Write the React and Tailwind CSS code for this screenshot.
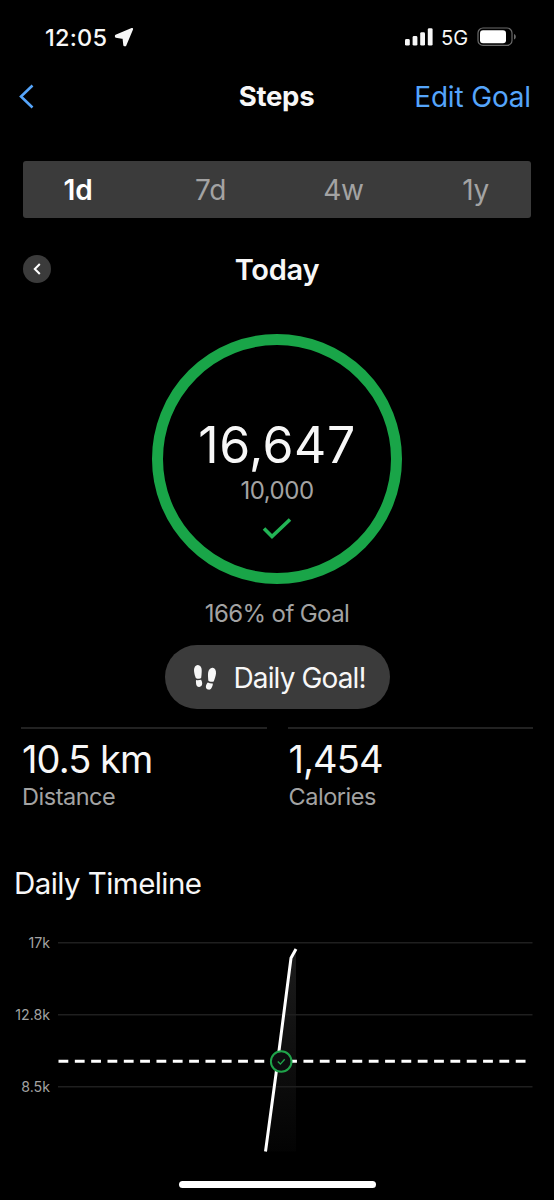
import React from "react";

const ranges = [
  { id: "1d", active: true, className: "pr-[17px]" },
  { id: "7d", className: "pr-1.5" },
  { id: "4w", className: "pl-1.5" },
  { id: "1y", className: "pl-4" },
];

const stats = [
  { value: "10.5 km", label: "Distance" },
  { value: "1,454", label: "Calories" },
];

const yTicks = ["17k", "12.8k", "8.5k"];

const StatusBar = () => (
  <div className="flex h-[74px] items-center justify-between pl-[45px] pr-[37px]">
    <div className="flex items-center gap-[7px]">
      <span className="pt-px text-[23.5px] font-medium leading-none tracking-[0.01em]">12:05</span>
      <svg className="h-5 w-5" viewBox="0 0 20 20" fill="currentColor">
        <path
          d="M18 2 2 8.800v.8L9.600 10.800 10.400 18.200h.8Z"
          stroke="currentColor"
          strokeWidth="2.2"
          strokeLinejoin="round"
        />
      </svg>
    </div>
    <div className="flex items-center">
      <svg className="h-[18px] w-7" viewBox="0 0 28 18" fill="currentColor">
        <rect x="0" y="11" width="4.8" height="6.6" rx="1.4" />
        <rect x="7.6" y="8" width="4.8" height="9.6" rx="1.4" />
        <rect x="15.2" y="4.2" width="4.8" height="13.4" rx="1.4" />
        <rect x="22.8" y="0.2" width="4.8" height="17.4" rx="1.4" />
      </svg>
      <span className="ml-2 w-[36px] pt-px text-[20px] leading-none">5G</span>
      <svg className="h-5 w-10" viewBox="0 0 40 20" fill="none">
        <rect x="1" y="1" width="34" height="17.4" rx="5" stroke="#6b6b6b" strokeWidth="1.2" />
        <rect x="3" y="3.2" width="26" height="13" rx="3" fill="#fff" />
        <path d="M37 7v5.6c1.2-.5 1.8-1.5 1.8-2.8S38.2 7.5 37 7Z" fill="#6b6b6b" />
      </svg>
    </div>
  </div>
);

const Footprints = () => (
  <svg className="h-[26px] w-6" viewBox="0 0 24 26" fill="currentColor">
    <path d="M4.7.9C7 .8 8.700 3 8.700 6c0 3.200-.2 5.600-.5 7.700-.5 1.300-4.800 1.500-5.400.3C1.700 11.200 1 8.700 1 6 1 3.200 2.500 1 4.700.9Z" />
    <path d="M3 16.100c1.600.3 3.400.2 5.100-.3.800 1.300 1.200 2.600 1.100 4-.1 1.800-1.300 3-2.900 3.100-1.900.1-3.100-1.200-3.200-3.100-.1-1.300-.3-2.500-.1-3.700Z" />
    <path d="M19.600 3.800c2.300.2 3.700 2.500 3.400 5.600-.3 2.900-1.300 5.500-2.200 7.800-.6 1.300-5.400.5-5.500-.8-.2-2.600-.5-5-.2-7.600.4-3 2.200-5.200 4.500-5Z" />
    <path d="M14.800 18.500c1.500.7 3.200 1 5 .9.100 1.300-.4 2.500-.8 3.700-.6 1.900-2 2.800-3.700 2.500-1.700-.3-2.600-1.700-2.400-3.400.2-1.500.9-2.700 1.900-3.700Z" />
  </svg>
);

const TimelineChart = () => (
  <div className="flex h-[230px]">
    <div className="flex w-[50px] flex-col text-right text-[14.2px] text-[#a3a3a3]">
      {yTicks.map((tick) => (
        <span key={tick} className="h-[72px] leading-[25px]">
          {tick}
        </span>
      ))}
    </div>
    <svg className="ml-2 h-[230px] w-[475px]" viewBox="58 930 475 230" fill="none">
      <defs>
        <linearGradient id="area" x1="0" y1="948" x2="0" y2="1152" gradientUnits="userSpaceOnUse">
          <stop offset="0" stopColor="#1c1c1c" />
          <stop offset="1" stopColor="#030303" />
        </linearGradient>
      </defs>
      <path d="M265.5 1151.5 291 958l5-9v202.5Z" fill="url(#area)" />
      <path d="M58 942.8h474.5M58 1014.8h474.5M58 1086.8h474.5" stroke="#1f1f1f" strokeWidth="1.5" />
      <path d="M58.5 1061.3H526" stroke="#fff" strokeWidth="3" strokeDasharray="9.8 6.53" />
      <path d="M265.5 1151.5 276 1074l15-116 5-9" stroke="#fff" strokeWidth="3" />
      <circle cx="281.2" cy="1061.5" r="10.3" fill="#0c0c0e" stroke="#1fa34a" strokeWidth="2" />
      <path d="m277.8 1061.5 2.6 2.6 4.3-4.8" stroke="#1fa34a" strokeWidth="1.4" />
    </svg>
  </div>
);

export default function App() {
  return (
    <div className="flex h-[1200px] w-[554px] flex-col overflow-hidden bg-black font-['Inter',sans-serif] text-[#f7f7f7]">
      <StatusBar />

      <header className="grid h-[46px] grid-cols-3 items-center pl-[20px] pr-[23px]">
        <svg className="-ml-0.5 h-[26px] w-[17px]" viewBox="0 0 17 26" fill="none">
          <path d="M14.5 1.5 3 12.5l11.5 11" stroke="#55a5fb" strokeWidth="2.6" />
        </svg>
        <h1 className="pl-0.5 text-center text-[27.5px] font-bold leading-none tracking-[-0.01em]">Steps</h1>
        <button className="whitespace-nowrap text-right text-[28px] leading-none tracking-[-0.006em] text-[#55a5fb]">
          Edit Goal
        </button>
      </header>

      <div className="mx-[23px] mt-[41px] grid h-[57px] grid-cols-4 items-center rounded-[3px] bg-[#3b3b3b] text-center text-[28px] tracking-[-0.01em]">
        {ranges.map(({ id, active, className }) => (
          <button
            key={id}
            className={`${className} ${active ? "font-semibold text-white" : "text-[#a3a3a3]"}`}
          >
            {id}
          </button>
        ))}
      </div>

      <div className="mt-[31px] grid h-10 grid-cols-[28px_1fr_28px] items-center px-[23px]">
        <button className="flex h-7 w-7 items-center justify-center rounded-full bg-[#3b3b3b]">
          <svg className="h-3 w-2" viewBox="0 0 8 12" fill="none">
            <path d="M6.8 1 1.8 6l5 5" stroke="#fff" strokeWidth="2" />
          </svg>
        </button>
        <h2 className="text-center text-[29px] font-semibold leading-none tracking-[-0.01em]">Today</h2>
      </div>

      <div className="mx-auto mt-[45px] flex h-[250px] w-[250px] flex-col items-center rounded-full border-[11.5px] border-[#19a548] pt-[70px]">
        <span className="text-[50px] leading-[60px] tracking-[0.01em]">16,647</span>
        <span className="text-[24px] leading-[31px] tracking-[-0.02em] text-[#a3a3a3]">10,000</span>
        <svg className="mt-3 h-[22px] w-[30px]" viewBox="0 0 30 22" fill="none">
          <path d="m2 10.500 8 8L28 1.5" stroke="#22b455" strokeWidth="3.6" />
        </svg>
      </div>

      <p className="mt-[14px] text-center text-[24px] leading-[31px] tracking-[-0.025em] text-[#a3a3a3]">
        166% of Goal
      </p>

      <div className="mx-auto mt-4 flex h-16 w-[225px] items-center rounded-full bg-[#3b3b3b] pl-7">
        <Footprints />
        <span className="ml-[17px] whitespace-nowrap pt-px text-[28px] leading-none tracking-[-0.031em]">
          Daily Goal!
        </span>
      </div>

      <div className="mt-[18px] flex gap-[21px] pl-[21px] pr-[21px]">
        {stats.map(({ value, label }) => (
          <div key={label} className="h-[90px] flex-1 border-t-2 border-[#222] pl-px">
            <p className="mt-[7px] text-[38px] leading-[46px] tracking-[-0.024em]">{value}</p>
            <p className="mt-px text-[23.5px] leading-[28px] tracking-[-0.02em] text-[#a3a3a3]">{label}</p>
          </div>
        ))}
      </div>

      <h3 className="mt-[46px] pl-[14px] text-[29.5px] leading-10 tracking-[-0.019em]">Daily Timeline</h3>

      <div className="mt-[27px]">
        <TimelineChart />
      </div>

      <div className="mx-auto mt-[21px] h-[7px] w-[197px] rounded-full bg-white" />
    </div>
  );
}
